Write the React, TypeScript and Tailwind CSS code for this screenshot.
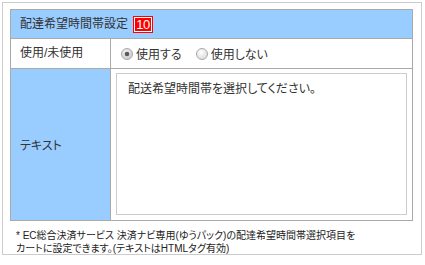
import React from "react";

const font = "font-[family-name:'Liberation_Sans','Noto_Sans_CJK_JP',sans-serif]";

function Radio({ checked }: { checked?: boolean }) {
  return (
    <svg width="12" height="12" viewBox="0 0 12 12" className="shrink-0">
      <defs>
        <radialGradient id={checked ? "rg1" : "rg2"} cx="40%" cy="35%" r="70%">
          <stop offset="0%" stopColor={checked ? "#f4f4f4" : "#ffffff"} />
          <stop offset="100%" stopColor={checked ? "#c8c8c8" : "#d9d9d9"} />
        </radialGradient>
      </defs>
      <circle cx="6" cy="6" r="5.5" fill={`url(#${checked ? "rg1" : "rg2"})`} stroke="#a9a9a9" strokeWidth="1" />
      {checked && <circle cx="6" cy="6" r="2.3" fill="#5a5a5a" />}
    </svg>
  );
}

export default function App() {
  return (
    <div className={`bg-white w-[425px] h-[265px] pt-[2px] pl-[2px] ${font} text-[#333] [font-feature-settings:'palt']`}>
      <div className="w-[420px] h-[253px] border border-[#cccccc] pt-[6px] pl-[7px] pr-[8px]">
        <div className="border border-[#aaaaaa] flex flex-col">
          <div className="h-[29px] bg-[#99ccff] border-b border-[#aaaaaa] flex items-center pl-[9px] text-[12px] text-[#333]">
            <span>配達希望時間帯設定</span>
            <span className="ml-[6px] bg-[#ff0000] text-white text-[13px] font-normal [font-family:'Liberation_Sans',Arial,sans-serif] w-[18px] h-[15px] border border-white outline outline-1 outline-[#ff0000] flex items-center justify-center leading-none tracking-[-0.5px]">10</span>
          </div>
          <div className="h-[30px] flex border-b border-[#aaaaaa]">
            <div className="w-[100px] border-r border-[#aaaaaa] flex items-center pl-[9px] text-[12px] pb-[2px]">使用/未使用</div>
            <div className="flex-1 flex items-center pl-[10px] text-[12px] pt-[1px]">
              <div className="flex items-center gap-[3px]">
                <Radio checked />
                <span className="pt-[2px]">使用する</span>
              </div>
              <div className="flex items-center gap-[3px] ml-[14px]">
                <Radio />
                <span className="pt-[2px]">使用しない</span>
              </div>
            </div>
          </div>
          <div className="h-[151px] flex">
            <div className="w-[100px] bg-[#99ccff] border-r border-[#aaaaaa] flex items-center pl-[9px] text-[12px] pt-[2px]">テキスト</div>
            <div className="flex-1 pt-[4px] pl-[5px] pr-[5px] pb-[5px] flex">
              <div className="flex-1 border border-[#cccccc] pl-[11px] pt-[7px] text-[12px] leading-[16px]">
                配送希望時間帯を選択してください。
              </div>
            </div>
          </div>
        </div>
        <div className="mt-[8px] pl-[6px] text-[10px] leading-[13px] text-[#222]">
          <div>* EC総合決済サービス 決済ナビ専用(ゆうパック)の配達希望時間帯選択項目を</div>
          <div>カートに設定できます。(テキストはHTMLタグ有効)</div>
        </div>
      </div>
    </div>
  );
}
